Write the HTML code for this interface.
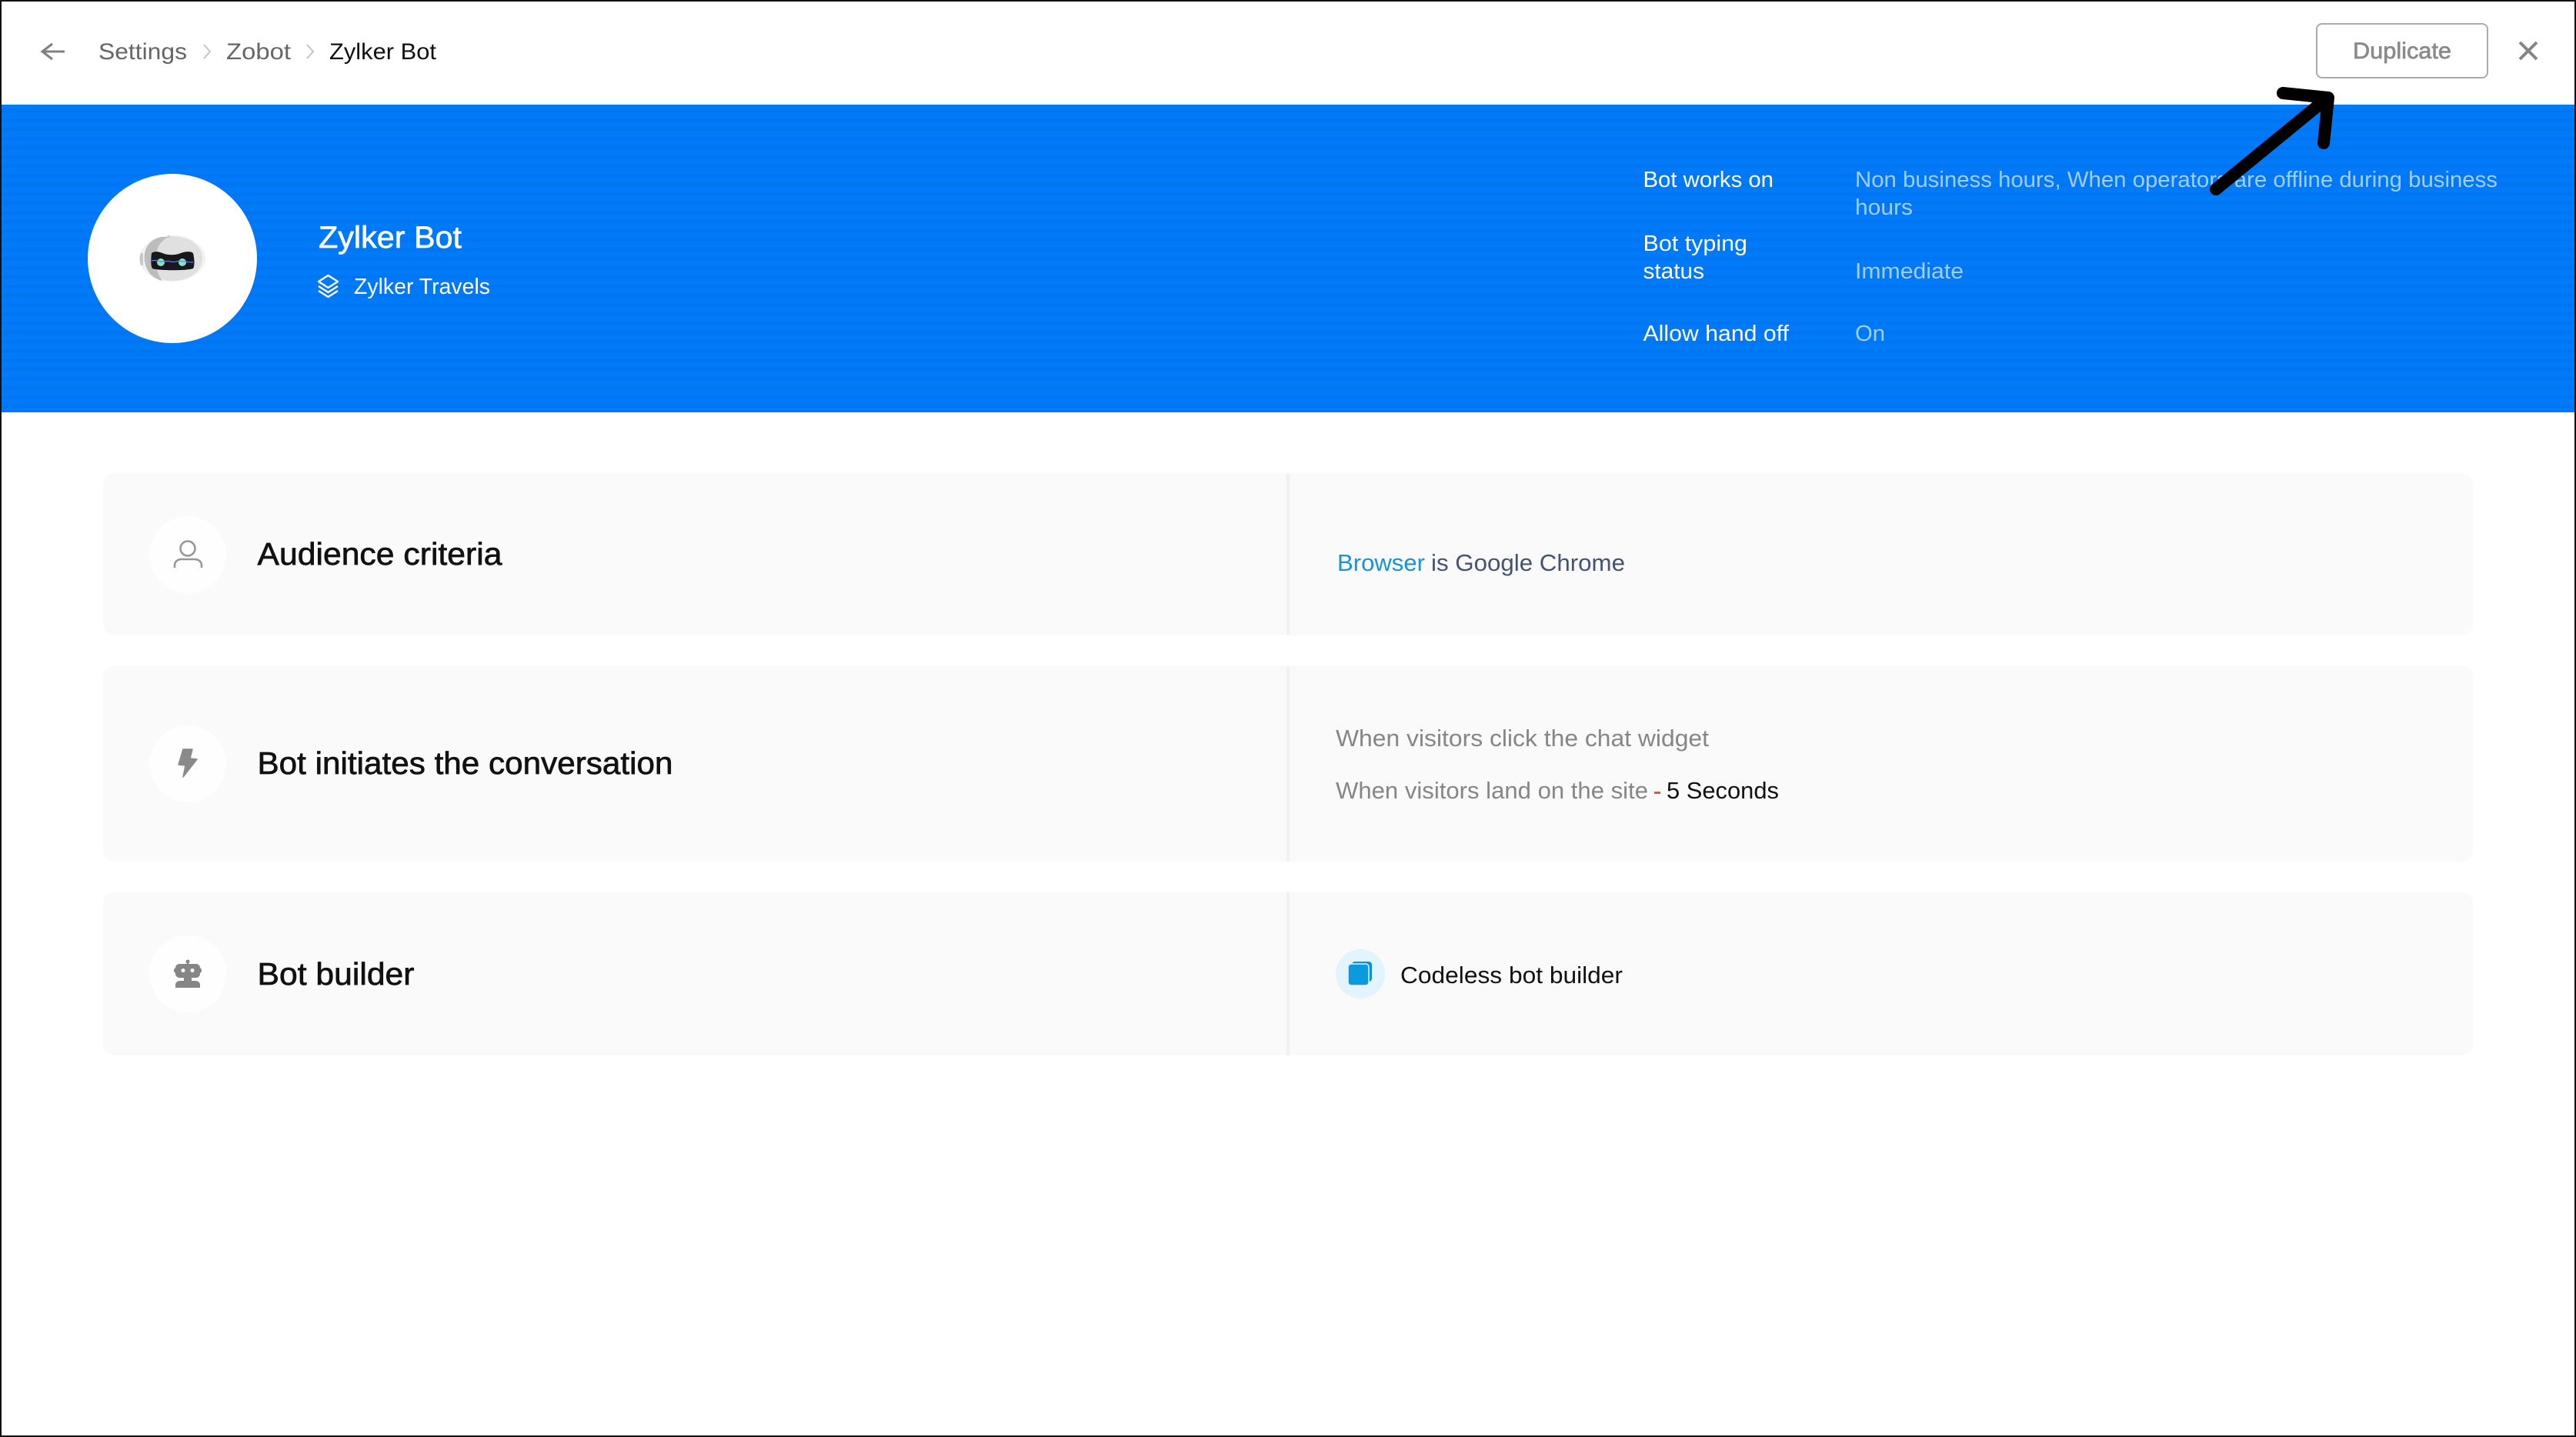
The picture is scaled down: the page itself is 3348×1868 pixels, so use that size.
<!DOCTYPE html>
<html lang="en">
<head>
<meta charset="utf-8">
<title>Zylker Bot</title>
<style>
html,body{margin:0;padding:0;background:#fff;width:3348px;height:1868px;overflow:hidden}
svg{display:block}
text{font-family:"Liberation Sans",sans-serif;white-space:pre}
.m{paint-order:stroke;stroke-width:.7px}
</style>
</head>
<body>
<svg xmlns="http://www.w3.org/2000/svg" width="3348" height="1868" viewBox="0 0 3348 1868">
<defs>
<pattern id="st" width="12" height="12" patternUnits="userSpaceOnUse" y="136">
<rect width="12" height="12" fill="#007af8"/>
<rect y="6" width="12" height="5" fill="#0076f2"/>
</pattern>
</defs>
<rect width="3348" height="1868" fill="#fff"/>
<!-- top bar -->
<path d="M84 67H56M68 57L55 67L68 77" fill="none" stroke="#808080" stroke-width="3"/>
<text x="128" y="77" font-size="30" fill="#666" textLength="115" lengthAdjust="spacingAndGlyphs">Settings</text>
<path d="M265 58L273 67L265 76" fill="none" stroke="#c4c4c4" stroke-width="2"/>
<text x="294" y="77" font-size="30" fill="#666" textLength="84" lengthAdjust="spacingAndGlyphs">Zobot</text>
<path d="M399 58L407 67L399 76" fill="none" stroke="#c4c4c4" stroke-width="2"/>
<text x="428" y="77" font-size="30" fill="#111" textLength="139" lengthAdjust="spacingAndGlyphs">Zylker Bot</text>
<rect x="3011" y="31" width="222" height="70" rx="7" fill="#fff" stroke="#ababab" stroke-width="2"/>
<text x="3058" y="76" font-size="30" fill="#8a8a8a" class="m" stroke="#8a8a8a" textLength="128" lengthAdjust="spacingAndGlyphs">Duplicate</text>
<path d="M3275 55L3297 77M3297 55L3275 77" stroke="#858585" stroke-width="4" fill="none"/>
<!-- hero -->
<rect y="136" width="3348" height="400" fill="url(#st)"/>
<circle cx="224" cy="336" r="110" fill="#fff"/>
<!-- robot mascot -->
<ellipse cx="224" cy="336" rx="43" ry="30" fill="#f2f2f2"/>
<ellipse cx="225" cy="336" rx="38" ry="29" fill="#e0e0e0"/>
<path d="M219 305L222 309L217 309Z" fill="#cfcfcf"/>
<path d="M209 308C192 312 187 325 188 337C189 351 197 362 211 365C204 355 201 345 203 332C204 321 209 313 219 308Z" fill="#bdbdbd"/>
<path d="M183 329C181 334 181 340 183 345L186 345L186 329Z" fill="#c8c8c8"/>
<path d="M197 329C201 326 206 327 211 329C218 332 228 332 235 329C240 327 248 326 251 329C253 338 253 346 251 349C244 352 205 352 198 349C196 346 196 338 197 329Z" fill="#17181c"/>
<circle cx="209" cy="341" r="5" fill="#8ee0c8"/>
<circle cx="237" cy="341" r="5" fill="#8ee0c8"/>
<path d="M197 339C203 337 208 341 214 340C220 338 224 342 229 340C235 338 240 341 251 341" fill="none" stroke="#6a7de0" stroke-width="1.2"/>
<text x="414" y="322" font-size="40" fill="#fff" class="m" stroke="#fff" textLength="186" lengthAdjust="spacingAndGlyphs">Zylker Bot</text>
<g fill="none" stroke="#fff" stroke-width="2.4" stroke-linejoin="round">
<path d="M426.500 358L439 366L426.500 374L414 366Z"/>
<path d="M414 372L426.500 380L439 372"/>
<path d="M414 378L426.500 386L439 378"/>
</g>
<text x="460" y="382" font-size="29" fill="#fff" textLength="177" lengthAdjust="spacingAndGlyphs">Zylker Travels</text>
<g font-size="29" fill="#fff">
<text x="2135.500" y="243" textLength="169.500" lengthAdjust="spacingAndGlyphs">Bot works on</text>
<text x="2135.500" y="326" textLength="135.500" lengthAdjust="spacingAndGlyphs">Bot typing</text>
<text x="2135.500" y="362" textLength="79.500" lengthAdjust="spacingAndGlyphs">status</text>
<text x="2135.500" y="443" textLength="189.500" lengthAdjust="spacingAndGlyphs">Allow hand off</text>
</g>
<g font-size="29" fill="#a2cefd">
<text x="2411" y="243" textLength="835" lengthAdjust="spacingAndGlyphs">Non business hours, When operators are offline during business</text>
<text x="2411" y="279" textLength="75" lengthAdjust="spacingAndGlyphs">hours</text>
<text x="2411" y="362" textLength="141" lengthAdjust="spacingAndGlyphs">Immediate</text>
<text x="2411" y="443" textLength="39" lengthAdjust="spacingAndGlyphs">On</text>
</g>
<!-- annotation arrow -->
<path d="M2880 246L3024 128M2967 121L3026 127L3020 186" fill="none" stroke="#000" stroke-width="16" stroke-linecap="round" stroke-linejoin="round"/>
<!-- cards -->
<rect x="134" y="615.500" width="3080" height="210" rx="14" fill="#fafafa"/>
<rect x="134" y="865.500" width="3080" height="254.500" rx="14" fill="#fafafa"/>
<rect x="134" y="1160" width="3080" height="212" rx="14" fill="#fafafa"/>
<rect x="1672" y="615.500" width="4" height="210" fill="#f1f1f1"/>
<rect x="1672" y="865.500" width="4" height="254.500" fill="#f1f1f1"/>
<rect x="1672" y="1160" width="4" height="212" fill="#f1f1f1"/>
<circle cx="244" cy="721" r="50" fill="#fefefe"/>
<circle cx="244" cy="993" r="50" fill="#fefefe"/>
<circle cx="244" cy="1266" r="50" fill="#fefefe"/>
<!-- person icon -->
<circle cx="244" cy="713" r="9.500" fill="none" stroke="#979797" stroke-width="2.600"/>
<path d="M227 738V735C227 730 231 727 236 727H253C258 727 262 730 262 735V738" fill="none" stroke="#979797" stroke-width="2.600"/>
<!-- bolt icon -->
<path d="M238 974H250L247 986L256 987L238 1010L241 995L232 994Z" fill="#8a8a8a" stroke="#8a8a8a" stroke-width="1.500" stroke-linejoin="round"/>
<!-- robot icon -->
<g fill="#868686">
<circle cx="244" cy="1250" r="2.500"/>
<rect x="243" y="1250" width="2" height="4"/>
<rect x="228" y="1253" width="32" height="18" rx="5"/>
<rect x="226" y="1258" width="36" height="7" rx="3"/>
<rect x="239" y="1271" width="10" height="5"/>
<path d="M228 1284V1280C228 1277 231 1275 234 1275H254C257 1275 260 1277 260 1280V1284Z"/>
</g>
<circle cx="238" cy="1261.500" r="2.500" fill="#fff"/>
<circle cx="250" cy="1261.500" r="2.500" fill="#fff"/>
<text x="334.500" y="734" font-size="41" fill="#111" class="m" stroke="#111" textLength="318" lengthAdjust="spacingAndGlyphs">Audience criteria</text>
<text x="334.500" y="1006" font-size="41" fill="#111" class="m" stroke="#111" textLength="540" lengthAdjust="spacingAndGlyphs">Bot initiates the conversation</text>
<text x="334.500" y="1280" font-size="41" fill="#111" class="m" stroke="#111" textLength="204" lengthAdjust="spacingAndGlyphs">Bot builder</text>
<text x="1738" y="742" font-size="31" fill="#1a92d6" textLength="114" lengthAdjust="spacingAndGlyphs">Browser</text>
<text x="1860" y="742" font-size="31" fill="#44546f" textLength="252" lengthAdjust="spacingAndGlyphs">is Google Chrome</text>
<text x="1736" y="970" font-size="31" fill="#868686" textLength="485" lengthAdjust="spacingAndGlyphs">When visitors click the chat widget</text>
<text x="1736" y="1038" font-size="31" fill="#868686" textLength="406" lengthAdjust="spacingAndGlyphs">When visitors land on the site</text>
<rect x="2150" y="1029" width="8" height="3" fill="#f0503c"/>
<text x="2166" y="1038" font-size="31" fill="#111" textLength="146" lengthAdjust="spacingAndGlyphs">5 Seconds</text>
<circle cx="1768" cy="1266" r="32" fill="#e2f4fe"/>
<rect x="1757" y="1250" width="26" height="26" rx="4" fill="#0f8fd0"/>
<rect x="1752" y="1253" width="27" height="28" rx="4" fill="#0b9ade" stroke="#e2f4fe" stroke-width="1.500"/>
<text x="1820" y="1278" font-size="31" fill="#111" textLength="289" lengthAdjust="spacingAndGlyphs">Codeless bot builder</text>
<!-- screenshot frame -->
<rect x="1" y="1" width="3346" height="1866" fill="none" stroke="#111" stroke-width="2"/>
</svg>
</body>
</html>
